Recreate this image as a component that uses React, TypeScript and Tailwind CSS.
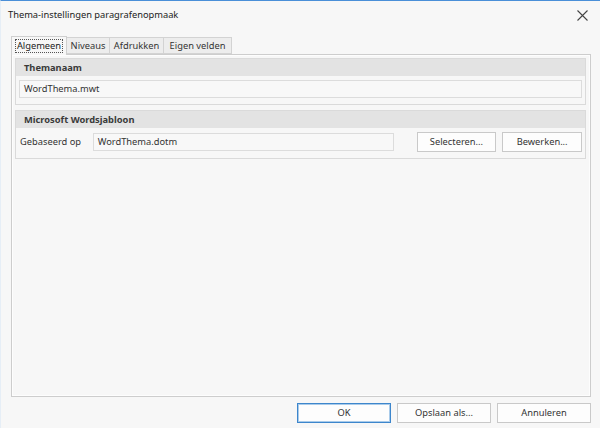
import React from 'react'

const FONT = "font-['Noto_Sans','Open_Sans',sans-serif]"

function GroupBox({ title, children }: { title: string; children: React.ReactNode }) {
  return (
    <div className="border border-[#dadada] bg-[#f7f7f7]">
      <div className="h-[17px] bg-[#e3e3e3] flex items-center pl-[8px] text-[9.3px] font-bold text-[#3a3a3a]">
        {title}
      </div>
      <div className="px-[3px] pt-[4px] pb-[6px]">{children}</div>
    </div>
  )
}

function TextBox({ value, className = '' }: { value: string; className?: string }) {
  return (
    <div
      className={`h-[18px] border border-[#dcdcdc] bg-[#f8f8f8] flex items-center pl-[4px] text-[9.3px] text-[#333] ${className}`}
    >
      {value}
    </div>
  )
}

function Button({ label, primary = false, className = '' }: { label: string; primary?: boolean; className?: string }) {
  return (
    <button
      type="button"
      className={`h-[20px] bg-[#fdfdfd] border text-[9.3px] text-[#333] flex items-center justify-center ${
        primary ? 'border-[#3d86cc] shadow-[inset_0_0_0_1px_#a9cbea]' : 'border-[#c9c9c9]'
      } ${className}`}
    >
      {label}
    </button>
  )
}

export default function App() {
  const tabs = [
    { label: 'Niveaus', w: 'w-[43px]' },
    { label: 'Afdrukken', w: 'w-[54px]' },
    { label: 'Eigen velden', w: 'w-[68px]' },
  ]

  return (
    <div className={`w-[600px] h-[428px] bg-[#f7f7f7] border-t border-[#4a8fd8] border-l border-l-[#e6eef6] flex flex-col ${FONT}`}>
      {/* Titelbalk */}
      <div className="h-[27px] flex items-center justify-between pl-[7px] pr-[12px]">
        <span className="text-[9.3px] text-[#222]">Thema-instellingen paragrafenopmaak</span>
        <svg width="11" height="11" viewBox="0 0 11 11" className="mt-[1px]">
          <path d="M0.5 0.5 L10.5 10.5 M10.5 0.5 L0.5 10.5" stroke="#444" strokeWidth="1.1" />
        </svg>
      </div>

      {/* Tabbladen */}
      <div className="pl-[10px] pr-[9px] mt-[7px]">
        <div className="flex items-end h-[19px]">
          <div className="relative z-10 h-[19px] w-[56px] border border-b-0 border-[#cfcfcf] bg-[#f7f7f7] flex items-center justify-center -mb-px">
            <span className="border border-dotted border-[#555] px-[1px] leading-[12px] text-[9.3px] text-[#222]">
              Algemeen
            </span>
          </div>
          {tabs.map((t) => (
            <div
              key={t.label}
              className={`h-[17px] ${t.w} border border-l-0 border-[#d3d3d3] bg-[#ededed] flex items-center justify-center text-[9.3px] text-[#333]`}
            >
              {t.label}
            </div>
          ))}
        </div>

        <div className="h-[343px] border border-[#cdcdcd] shadow-[inset_0_0_0_1px_#fdfdfd] pt-[3px] pl-[3px] pr-[4px] flex flex-col gap-[5px]">
          <GroupBox title="Themanaam">
            <TextBox value="WordThema.mwt" />
          </GroupBox>
          <GroupBox title="Microsoft Wordsjabloon">
            <div className="flex items-center">
              <span className="w-[74px] pl-[1px] whitespace-nowrap text-[9.3px] text-[#333]">Gebaseerd op</span>
              <TextBox value="WordThema.dotm" className="w-[302px]" />
              <Button label="Selecteren..." className="w-[80px] ml-[23px]" />
              <Button label="Bewerken..." className="w-[80px] ml-[6px]" />
            </div>
          </GroupBox>
        </div>
      </div>

      {/* Knoppen */}
      <div className="flex justify-end gap-[6px] pr-[9px] mt-[6px]">
        <Button label="OK" primary className="w-[94px]" />
        <Button label="Opslaan als..." className="w-[94px]" />
        <Button label="Annuleren" className="w-[94px]" />
      </div>
    </div>
  )
}
